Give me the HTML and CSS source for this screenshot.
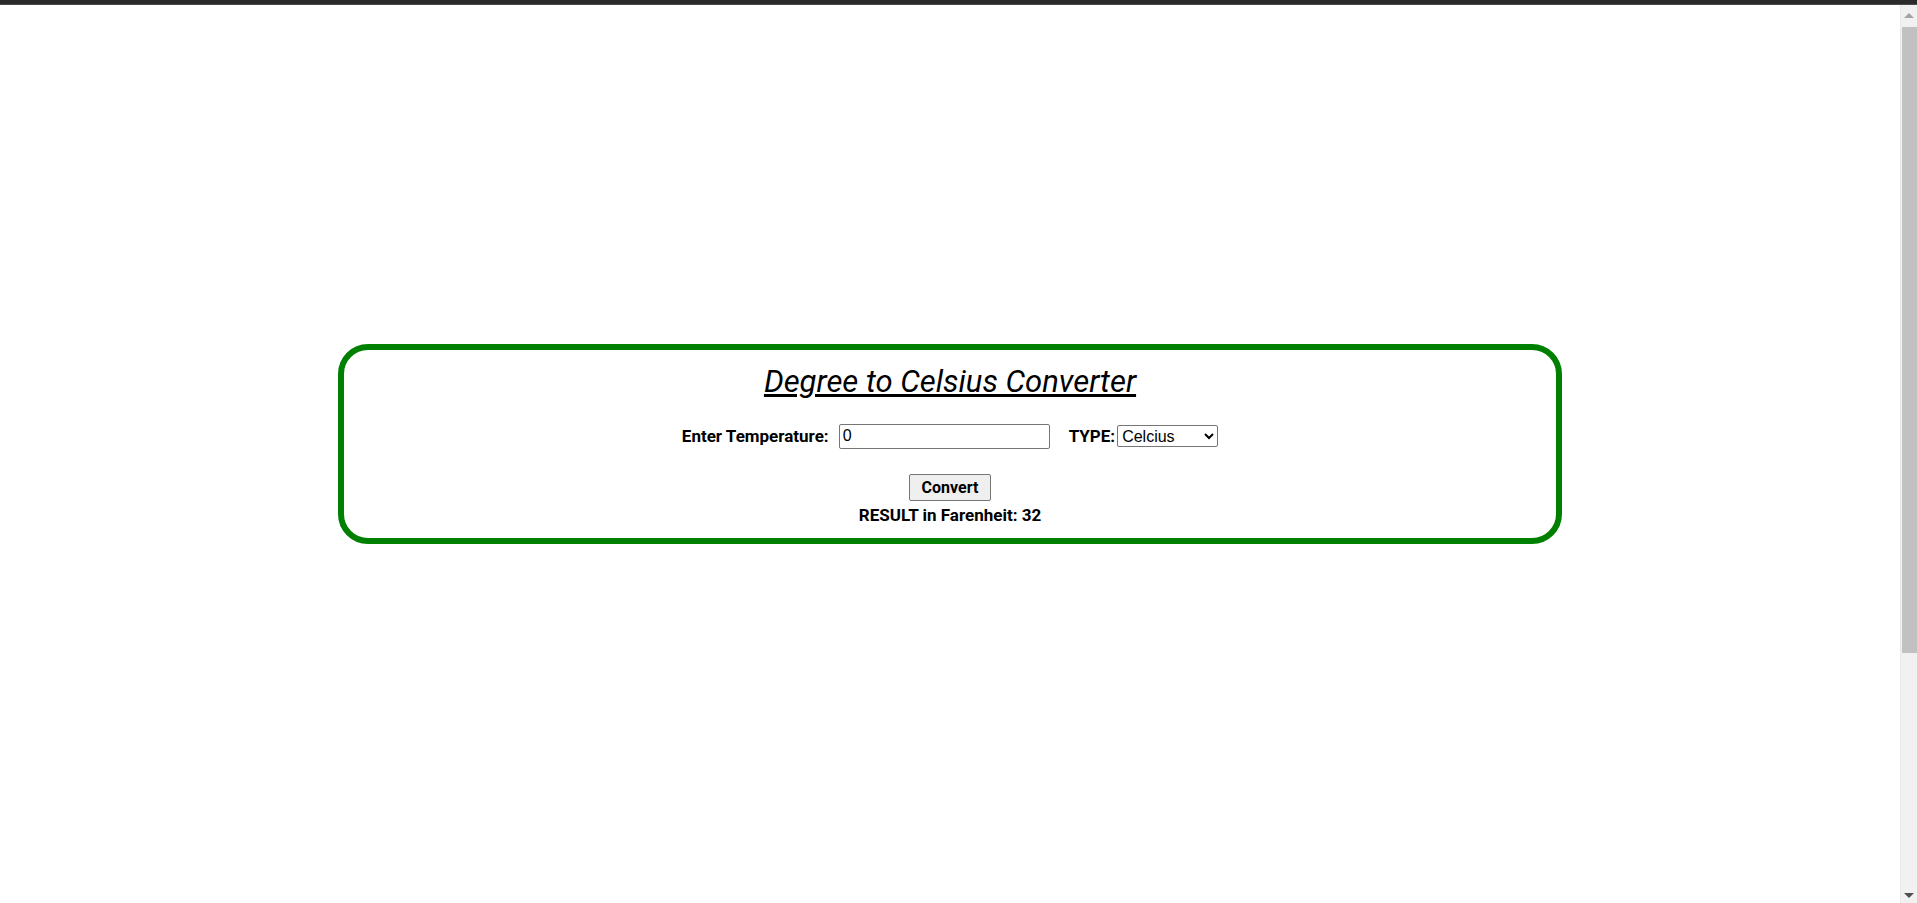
FILE: index.html
```html
<!DOCTYPE html>
<html lang="en">
<head>
<meta charset="utf-8">
<title>Degree to Celsius Converter</title>
<link rel="stylesheet" href="styles.css">
</head>
<body>
<div class="topbar"></div>
<main class="page">
  <section class="converter">
    <h2 class="title">Degree to Celsius Converter</h2>
    <div class="row">
      <label class="label" for="temp">Enter Temperature:</label>
      <input class="field" id="temp" type="text" value="0">
      <label class="label type-label" for="type">TYPE:</label><select class="picker" id="type">
        <option>Celcius</option>
        <option>Farenheit</option>
      </select>
    </div>
    <button class="convert" type="button">Convert</button>
    <div class="result">RESULT in Farenheit: 32</div>
  </section>
</main>
<div class="scrollbar" aria-hidden="true">
  <span class="arrow arrow-up"></span>
  <span class="thumb"></span>
  <span class="arrow arrow-down"></span>
</div>
</body>
</html>
```

FILE: styles.css
```css
html, body {
  margin: 0;
  padding: 0;
  background: #ffffff;
}

body {
  font-family: Roboto, "Liberation Sans", Arial, sans-serif;
  color: #000;
}

.topbar {
  height: 5px;
  background: #2b2b2b;
  border-bottom: 1px solid #4a4a4a;
  box-sizing: border-box;
}

.page {
  min-height: 1250px;
  display: flex;
  justify-content: center;
  align-items: flex-start;
  padding-top: 339px;
  padding-right: 17px;
  box-sizing: border-box;
}

.converter {
  box-sizing: border-box;
  width: 1224px;
  height: 200px;
  border: 6px solid #008000;
  border-radius: 30px;
  display: flex;
  flex-direction: column;
  align-items: center;
  padding-top: 13px;
}

.title {
  margin: 0;
  font-family: Roboto, sans-serif;
  font-style: italic;
  font-weight: 400;
  font-size: 31px;
  line-height: 38px;
  text-decoration: underline;
}

.row {
  display: flex;
  align-items: center;
  margin-top: 22px;
  height: 26px;
}

.label {
  font-family: Roboto, sans-serif;
  font-weight: 700;
  font-size: 17px;
}

.field {
  margin-left: 10px;
  width: 211px;
  height: 25px;
  box-sizing: border-box;
  font-family: "Liberation Sans", Arial, sans-serif;
  font-size: 16px;
  padding: 1px 3px;
  border: 1px solid #767676;
  border-radius: 2px;
}

.type-label {
  margin-left: 19px;
}

.picker {
  margin-left: 2px;
  width: 101px;
  height: 22px;
  box-sizing: border-box;
  font-family: "Liberation Sans", Arial, sans-serif;
  font-size: 16px;
  border: 1px solid #767676;
  border-radius: 2px;
  background: #fff;
}

.convert {
  margin-top: 25px;
  width: 82px;
  height: 27px;
  box-sizing: border-box;
  font-family: Roboto, sans-serif;
  font-weight: 700;
  font-size: 16px;
  background: #efefef;
  border: 1px solid #767676;
  border-radius: 2px;
  padding: 0;
}

.result {
  margin-top: 4px;
  font-family: Roboto, sans-serif;
  font-weight: 700;
  font-size: 17px;
  line-height: 20px;
}

.scrollbar {
  position: fixed;
  top: 5px;
  right: 0;
  bottom: 0;
  width: 17px;
  background: #f1f1f1;
  border-left: 1px solid #e8e8e8;
  box-sizing: border-box;
  display: flex;
  flex-direction: column;
  align-items: center;
}

.arrow {
  width: 0;
  height: 0;
  border-left: 5px solid transparent;
  border-right: 5px solid transparent;
}

.arrow-up {
  margin-top: 8px;
  border-bottom: 5px solid #a3a3a3;
}

.arrow-down {
  margin-top: auto;
  margin-bottom: 5px;
  border-top: 5px solid #505050;
}

.thumb {
  margin-top: 9px;
  width: 15px;
  height: 626px;
  background: #c1c1c1;
}
```
